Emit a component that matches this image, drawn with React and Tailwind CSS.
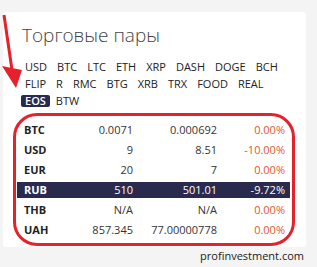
import React from 'react';

const tokens = [
  'USD', 'BTC', 'LTC', 'ETH', 'XRP', 'DASH', 'DOGE', 'BCH',
  'FLIP', 'R', 'RMC', 'BTG', 'XRB', 'TRX', 'FOOD', 'REAL',
  'EOS', 'BTW'
];

const rows = [
  { cur: 'BTC', a: '0.0071', b: '0.000692', c: '0.00%' },
  { cur: 'USD', a: '9', b: '8.51', c: '-10.00%' },
  { cur: 'EUR', a: '20', b: '7', c: '0.00%' },
  { cur: 'RUB', a: '510', b: '501.01', c: '-9.72%', active: true },
  { cur: 'THB', a: 'N/A', b: 'N/A', c: '0.00%' },
  { cur: 'UAH', a: '857.345', b: '77.00000778', c: '0.00%' },
];

const App = () => {
  return (
    <div className="w-[317px] h-[267px] bg-[#f4f4f4] relative overflow-hidden" style={{ fontFamily: '"Open Sans", sans-serif' }}>
      <div className="ml-[3px] mt-[12px] w-[303px] h-[235px] bg-white rounded-[3px] pt-[10px]">
        <h1 className="pl-[19px] text-[19px] font-light text-[#444] leading-[26px]">Торговые пары</h1>

        {/* currency tabs */}
        <div className="mt-[13px] pl-[18px] pr-[12px] flex flex-wrap gap-y-[5px] gap-x-[2px] text-[11px] leading-[12px] text-[#222]">
          {tokens.map(t => (
            <span
              key={t}
              className={t === 'EOS' ? 'px-[4px] bg-[#2a2a4e] text-white rounded-[2px] font-semibold' : 'px-[4px]'}
            >
              {t}
            </span>
          ))}
        </div>

        {/* rates table */}
        <div className="mt-[13px] ml-[14px] w-[273px] text-[11px]">
          {rows.map(r => (
            <div key={r.cur} className="py-[2px]">
              <div className={`flex items-center h-[16px] pl-[7px] pr-[5px] ${r.active ? 'bg-[#2a2a4e] text-white' : 'text-[#333]'}`}>
                <span className={`w-[50px] font-bold ${r.active ? 'text-white' : 'text-[#222]'}`}>{r.cur}</span>
                <span className="w-[59px] text-right">{r.a}</span>
                <span className="w-[84px] text-right">{r.b}</span>
                <span className={`w-[68px] text-right ${r.active ? 'text-white' : 'text-[#e2582c]'}`}>{r.c}</span>
              </div>
            </div>
          ))}
        </div>
      </div>

      <div className="pr-[13px] mt-[2px] text-right text-[11px] leading-[14px] text-[#222]">profinvestment.com</div>

      {/* annotation: red outline round the table */}
      <div className="absolute left-[13px] top-[113px] w-[282px] h-[133px] border-[3px] border-[#e5222c] rounded-[24px] pointer-events-none"></div>

      {/* annotation: red arrow */}
      <svg className="absolute left-0 top-0 pointer-events-none" width="40" height="100" viewBox="0 0 40 100">
        <line x1="4" y1="15" x2="12" y2="70" stroke="#e5222c" strokeWidth="3" />
        <polygon points="2,66 22,70 16,88" fill="#e5222c" />
      </svg>
    </div>
  );
};

export default App;
